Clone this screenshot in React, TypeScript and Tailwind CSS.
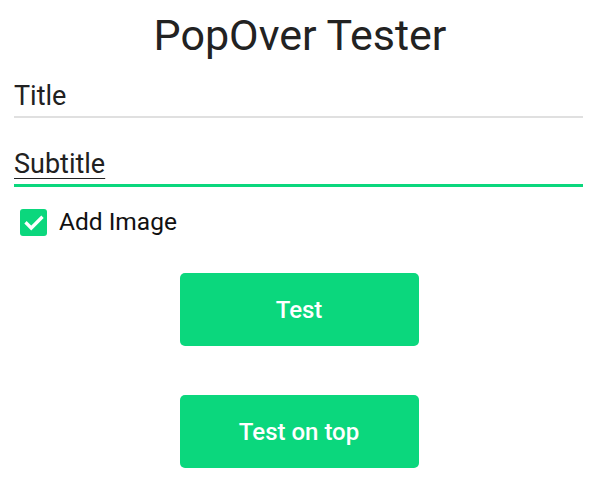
import React from "react";

export default function App() {
  return (
    <div
      className="w-[600px] h-[482px] bg-white overflow-hidden flex flex-col"
      style={{ fontFamily: "Roboto, 'Noto Sans', sans-serif" }}
    >
      <h1 className="text-[43px] leading-none text-[#222222] text-center mt-[14px]">PopOver Tester</h1>
      <div className="ml-[14px] mr-[17px] mt-[24px] border-b-[2px] border-[#e0e0e0] pb-[4px]">
        <span className="text-[27px] leading-[30px] text-[#212121]">Title</span>
      </div>
      <div className="ml-[14px] mr-[17px] mt-[30px] border-b-[3px] border-[#0bd77d] pb-[4px]">
        <span className="text-[27px] leading-[32px] text-[#212121] underline underline-offset-[5px] decoration-1">Subtitle</span>
      </div>
      <div className="flex items-center ml-[20px] mt-[22px] gap-[12px]">
        <div className="w-[27px] h-[27px] rounded-[3px] bg-[#0bd77d] flex items-center justify-center">
          <svg width="22" height="22" viewBox="0 0 24 24" fill="none" stroke="white" strokeWidth="3.6" strokeLinecap="square">
            <path d="M4 12.5l5 5L20 6.5" />
          </svg>
        </div>
        <span className="text-[24.5px] leading-none text-[#111111]">Add Image</span>
      </div>
      <div className="flex flex-col items-center mt-[37px] gap-[49px]">
        <button className="w-[239px] h-[73px] rounded-[5px] bg-[#0bd77d] text-white text-[24px] font-medium -translate-x-[1px]">Test</button>
        <button className="w-[239px] h-[73px] rounded-[5px] bg-[#0bd77d] text-white text-[24px] font-medium -translate-x-[1px]">Test on top</button>
      </div>
    </div>
  );
}
